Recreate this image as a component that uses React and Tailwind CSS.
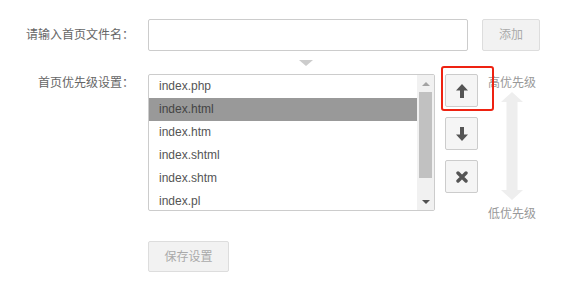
import React from "react";

const files = ["index.php", "index.html", "index.htm", "index.shtml", "index.shtm", "index.pl"];

const ArrowUp = () => (
  <svg width="12" height="14" viewBox="0 0 12 14">
    <path d="M6 0 L12 6.5 L8 6.5 L8 14 L4 14 L4 6.5 L0 6.5 Z" fill="#555" />
  </svg>
);

const ArrowDown = () => (
  <svg width="12" height="14" viewBox="0 0 12 14">
    <path d="M6 14 L12 7.5 L8 7.5 L8 0 L4 0 L4 7.5 L0 7.5 Z" fill="#555" />
  </svg>
);

const Cross = () => (
  <svg width="12" height="12" viewBox="0 0 12 12">
    <path d="M2 2 L10 10 M10 2 L2 10" stroke="#555" strokeWidth="3.4" strokeLinecap="round" />
  </svg>
);

export default function App() {
  const selected = 1;

  return (
    <div
      className="relative w-[573px] h-[281px] bg-white pt-[19px] text-[12px]"
      style={{ fontFamily: "'Liberation Sans', 'Noto Sans CJK SC', sans-serif" }}
    >
      {/* file name input */}
      <div className="flex items-center h-[32px]">
        <div className="w-[134px] text-right text-[#666]">请输入首页文件名：</div>
        <input
          type="text"
          className="ml-[14px] w-[320px] h-[32px] border border-[#ccc] rounded-[2px] outline-none px-2"
        />
        <button className="ml-[14px] w-[58px] h-[32px] bg-[#f2f2f2] border border-[#ddd] rounded-[2px] text-[#aaa] text-[12px]">
          添加
        </button>
      </div>

      {/* dropdown hint */}
      <div className="h-[23px] pl-[299px] pt-[9px]">
        <div className="w-0 h-0 border-l-[7px] border-r-[7px] border-t-[6px] border-l-transparent border-r-transparent border-t-[#ccc]"></div>
      </div>

      {/* priority list */}
      <div className="flex items-start">
        <div className="w-[134px] text-right text-[#666] leading-[18px]">首页优先级设置：</div>
        <div className="ml-[14px] w-[287px] h-[137px] border border-[#ccc] rounded-[2px] flex overflow-hidden">
          <ul className="flex-1 overflow-hidden">
            {files.map((f, i) => (
              <li
                key={f}
                className={`h-[23px] leading-[23px] pl-[10px] ${i === selected ? "bg-[#999] text-[#444]" : "text-[#555]"}`}
              >
                {f}
              </li>
            ))}
          </ul>
          <div className="w-[17px] bg-[#f1f1f1] flex flex-col items-center">
            <div className="h-[17px] flex items-center justify-center">
              <div className="w-0 h-0 border-l-[4px] border-r-[4px] border-b-[4px] border-l-transparent border-r-transparent border-b-[#a3a3a3]"></div>
            </div>
            <div className="w-[13px] h-[86px] bg-[#c1c1c1]"></div>
            <div className="flex-1"></div>
            <div className="h-[17px] flex items-center justify-center">
              <div className="w-0 h-0 border-l-[4px] border-r-[4px] border-t-[4px] border-l-transparent border-r-transparent border-t-[#505050]"></div>
            </div>
          </div>
        </div>

        <div className="ml-[10px] flex flex-col gap-[10px]">
          <button className="w-[33px] h-[33px] bg-[#f5f5f5] border border-[#ccc] rounded-[2px] flex items-center justify-center">
            <ArrowUp />
          </button>
          <button className="w-[33px] h-[33px] bg-[#f5f5f5] border border-[#ccc] rounded-[2px] flex items-center justify-center">
            <ArrowDown />
          </button>
          <button className="w-[33px] h-[33px] bg-[#f5f5f5] border border-[#ccc] rounded-[2px] flex items-center justify-center">
            <Cross />
          </button>
        </div>

        <div className="ml-[10px] w-[48px] flex flex-col items-center text-[#999]">
          <div className="leading-[18px]">高优先级</div>
          <svg width="22" height="108" viewBox="0 0 22 108">
            <path
              d="M11 0 L22 10 L16.5 10 L16.5 98 L22 98 L11 108 L0 98 L5.5 98 L5.5 10 L0 10 Z"
              fill="#eeeeee"
            />
          </svg>
          <div className="mt-[5px] leading-[18px]">低优先级</div>
        </div>
      </div>

      {/* save */}
      <button className="block mt-[18px] ml-[148px] w-[81px] h-[31px] bg-[#f2f2f2] border border-[#ddd] rounded-[2px] text-[#aaa] text-[12px]">
        保存设置
      </button>

      {/* highlight */}
      <div className="absolute left-[441px] top-[66px] w-[53px] h-[45px] border-2 border-[#ee2211] rounded-[3px]"></div>
    </div>
  );
}
